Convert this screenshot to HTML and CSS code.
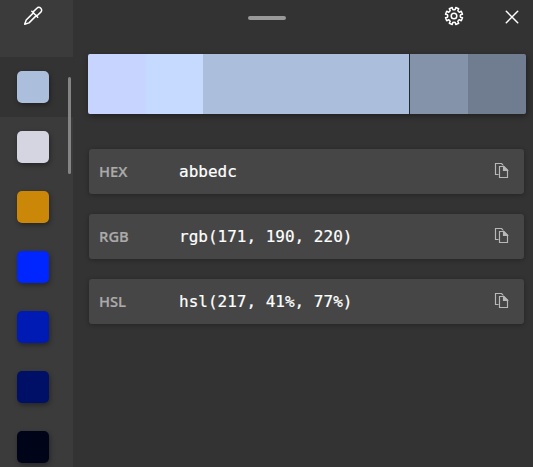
FILE: index.html
```
<!DOCTYPE html>
<html lang="en">
<head>
<meta charset="utf-8">
<title>Color picker</title>
<link rel="stylesheet" href="styles.css">
</head>
<body>
<div class="app">
  <aside class="sidebar">
    <button class="pick" aria-label="Pick color">
      <svg width="20" height="20" viewBox="0 0 20 20"><path d="M10.6 6.6 3.2 14 1.7 18.3 6 16.9 13.5 9.4M8.8 5.3 14.7 11.2M10.4 5.6 13.9 2.2C15 1.1 16.6 1 17.8 2.2C19 3.4 18.9 5 17.8 6.1L14.3 9.5"/></svg>
    </button>
    <div class="item selected"><span class="swatch steel"></span></div>
    <div class="item"><span class="swatch pale"></span></div>
    <div class="item"><span class="swatch amber"></span></div>
    <div class="item"><span class="swatch blue"></span></div>
    <div class="item"><span class="swatch royal"></span></div>
    <div class="item"><span class="swatch navy"></span></div>
    <div class="item"><span class="swatch night"></span></div>
    <span class="scrollbar"></span>
  </aside>
  <main class="main">
    <header class="top">
      <span class="grip"></span>
      <button class="gear" aria-label="Settings">
        <svg width="20" height="20" viewBox="0 0 20 20"><path d="M8.2 1.5 8.8 3.5Q10 4.1 11.2 3.5L11.8 1.5 14.7 2.7 13.8 4.6Q14.2 5.8 15.4 6.2L17.3 5.3 18.5 8.2 16.5 8.8Q15.9 10 16.5 11.2L18.5 11.8 17.3 14.7 15.4 13.8Q14.2 14.2 13.8 15.4L14.7 17.3 11.8 18.5 11.2 16.5Q10 15.9 8.8 16.5L8.2 18.5 5.3 17.3 6.2 15.4Q5.8 14.2 4.6 13.8L2.7 14.7 1.5 11.8 3.5 11.2Q4.1 10 3.5 8.8L1.5 8.2 2.7 5.3 4.6 6.2Q5.8 5.8 6.2 4.6L5.3 2.7Z"/><circle cx="10" cy="10" r="2.8"/></svg>
      </button>
      <button class="close" aria-label="Close">
        <svg width="14" height="14" viewBox="0 0 14 14"><path d="M1.3 1.3 12.7 12.7M12.7 1.3 1.3 12.7"/></svg>
      </button>
    </header>
    <div class="shades">
      <span class="shade lightest"></span><span class="shade lighter"></span><span class="shade current"></span><span class="shade darker"></span><span class="shade darkest"></span>
    </div>
    <div class="formats">
      <div class="row"><span class="label">HEX</span><span class="value">abbedc</span>
        <svg class="copy" width="15" height="17" viewBox="0 0 15 17"><path d="M4.5 12.5H1.5V1.5H7.5L9 3M5.5 4.5H10L13.5 8V15.5H5.5Z"/><path class="fold" d="M9.5 4.5V8.5H13.5Z"/></svg></div>
      <div class="row"><span class="label">RGB</span><span class="value">rgb(171, 190, 220)</span>
        <svg class="copy" width="15" height="17" viewBox="0 0 15 17"><path d="M4.5 12.5H1.5V1.5H7.5L9 3M5.5 4.5H10L13.5 8V15.5H5.5Z"/><path class="fold" d="M9.5 4.5V8.5H13.5Z"/></svg></div>
      <div class="row"><span class="label">HSL</span><span class="value">hsl(217, 41%, 77%)</span>
        <svg class="copy" width="15" height="17" viewBox="0 0 15 17"><path d="M4.5 12.5H1.5V1.5H7.5L9 3M5.5 4.5H10L13.5 8V15.5H5.5Z"/><path class="fold" d="M9.5 4.5V8.5H13.5Z"/></svg></div>
    </div>
  </main>
</div>
</body>
</html>
```
FILE: styles.css
```
* { box-sizing: border-box; }
body { margin: 0; background: #333; font-family: "Open Sans", sans-serif; }
button { display: flex; align-items: flex-start; padding: 0; border: 0; background: none; }
svg { display: block; fill: none; stroke: #fff; stroke-width: 1.5; stroke-linejoin: round; stroke-linecap: round; }

.app { display: flex; width: 533px; height: 467px; overflow: hidden; background: #333; }

.sidebar { position: relative; flex: 0 0 73px; background: #3b3b3b; overflow: hidden; }
.pick { width: 100%; height: 57px; padding: 6px 0 0 23px; }
.item { height: 60px; padding: 14px 0 0 17px; }
.selected { background: #333; }
.swatch { display: block; width: 32px; height: 32px; border-radius: 5px; box-shadow: 1px 2px 5px rgba(0, 0, 0, .38); }
.steel { background: #abbedc; }
.pale { background: #d5d5e1; }
.amber { background: #cb8707; }
.blue { background: #0026ff; }
.royal { background: #001bb3; }
.navy { background: #001066; }
.night { background: #000419; }
.scrollbar { position: absolute; left: 68px; top: 77px; width: 3px; height: 97px; border-radius: 2px; background: #858585; }

.main { flex: 1; padding: 0 7px 0 15px; }
.top { display: flex; align-items: flex-start; height: 54px; }
.grip { width: 38px; height: 4px; margin: 16px 0 0 160px; border-radius: 2px; background: #999; }
.gear { margin: 6px 0 0 158px; }
.close { margin: 10px 0 0 41px; }

.shades { display: flex; height: 60px; border-radius: 2px; overflow: hidden; box-shadow: 1px 2px 6px rgba(0, 0, 0, .4); }
.shade { flex: 0 0 58px; }
.lightest { background: #c7d4ff; }
.lighter { flex-basis: 57px; background: #c6d9ff; }
.current { flex: 1; background: #abbedc; border-right: 1px solid #222b30; }
.darker { background: #8492aa; }
.darkest { background: #707d90; }

.formats { display: flex; flex-direction: column; gap: 20px; padding: 35px 2px 0 1px; }
.row { display: flex; align-items: center; height: 45px; padding: 0 15px 0 10px; border-radius: 3px; background: #464646; box-shadow: 0 1px 5px rgba(0, 0, 0, .3); }
.label { width: 80px; margin-bottom: 2px; color: #ababab; font-size: 14.7px; font-weight: 600; line-height: 20px; -webkit-text-stroke: .2px #ababab; }
.value { flex: 1; color: #fff; font: 16px/20px "DejaVu Sans Mono", monospace; white-space: pre; -webkit-text-stroke: .2px #fff; }
.copy { margin-bottom: 2px; stroke: #b8b8b8; stroke-width: 1.15; stroke-linejoin: miter; stroke-linecap: butt; }
.fold { fill: #b8b8b8; }
```
